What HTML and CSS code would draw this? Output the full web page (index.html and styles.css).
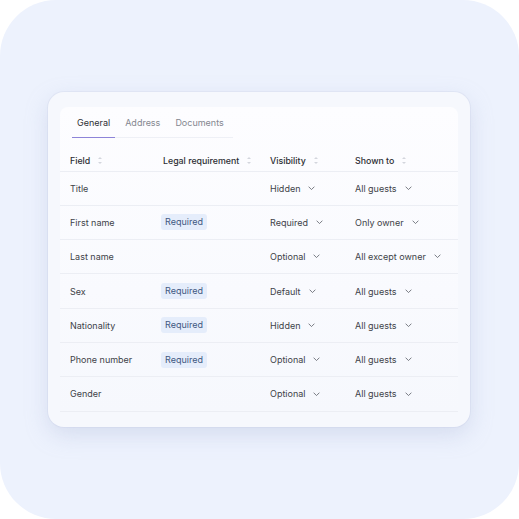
FILE: index.html
```html
<!DOCTYPE html>
<html lang="en">
<head>
    <meta charset="UTF-8">
    <meta name="viewport" content="width=device-width, initial-scale=1.0">
    <title>Guest fields</title>
    <link rel="stylesheet" href="styles.css">
</head>
<body>
    <div class="backdrop">
        <div class="card">
            <div class="panel">
                <div class="tabs">
                    <button class="tabs__tab is-selected">General</button>
                    <button class="tabs__tab">Address</button>
                    <button class="tabs__tab">Documents</button>
                </div>

                <div class="fields">
                    <div class="fields__row fields__row--head">
                        <span class="fields__th">Field <i class="sort"></i></span>
                        <span class="fields__th">Legal requirement <i class="sort"></i></span>
                        <span class="fields__th">Visibility <i class="sort"></i></span>
                        <span class="fields__th">Shown to <i class="sort"></i></span>
                    </div>

                    <div class="fields__row">
                        <span>Title</span>
                        <span></span>
                        <span class="select">Hidden <svg viewBox="0 0 8 5"><path d="M1 1l3 3 3-3"/></svg></span>
                        <span class="select">All guests <svg viewBox="0 0 8 5"><path d="M1 1l3 3 3-3"/></svg></span>
                    </div>
                    <div class="fields__row">
                        <span>First name</span>
                        <span><em class="badge">Required</em></span>
                        <span class="select">Required <svg viewBox="0 0 8 5"><path d="M1 1l3 3 3-3"/></svg></span>
                        <span class="select">Only owner <svg viewBox="0 0 8 5"><path d="M1 1l3 3 3-3"/></svg></span>
                    </div>
                    <div class="fields__row">
                        <span>Last name</span>
                        <span></span>
                        <span class="select">Optional <svg viewBox="0 0 8 5"><path d="M1 1l3 3 3-3"/></svg></span>
                        <span class="select">All except owner <svg viewBox="0 0 8 5"><path d="M1 1l3 3 3-3"/></svg></span>
                    </div>
                    <div class="fields__row">
                        <span>Sex</span>
                        <span><em class="badge">Required</em></span>
                        <span class="select">Default <svg viewBox="0 0 8 5"><path d="M1 1l3 3 3-3"/></svg></span>
                        <span class="select">All guests <svg viewBox="0 0 8 5"><path d="M1 1l3 3 3-3"/></svg></span>
                    </div>
                    <div class="fields__row">
                        <span>Nationality</span>
                        <span><em class="badge">Required</em></span>
                        <span class="select">Hidden <svg viewBox="0 0 8 5"><path d="M1 1l3 3 3-3"/></svg></span>
                        <span class="select">All guests <svg viewBox="0 0 8 5"><path d="M1 1l3 3 3-3"/></svg></span>
                    </div>
                    <div class="fields__row">
                        <span>Phone number</span>
                        <span><em class="badge">Required</em></span>
                        <span class="select">Optional <svg viewBox="0 0 8 5"><path d="M1 1l3 3 3-3"/></svg></span>
                        <span class="select">All guests <svg viewBox="0 0 8 5"><path d="M1 1l3 3 3-3"/></svg></span>
                    </div>
                    <div class="fields__row">
                        <span>Gender</span>
                        <span></span>
                        <span class="select">Optional <svg viewBox="0 0 8 5"><path d="M1 1l3 3 3-3"/></svg></span>
                        <span class="select">All guests <svg viewBox="0 0 8 5"><path d="M1 1l3 3 3-3"/></svg></span>
                    </div>
                </div>
            </div>
        </div>
    </div>
</body>
</html>
```

FILE: styles.css
```css
html, body { margin: 0; height: 100%; background: #fff; }
body { font-family: Inter, "Noto Sans", sans-serif; font-size: 9px; color: #404248; }

.backdrop { width: 519px; height: 519px; border-radius: 56px; background: #edf2fd; padding: 92px 49px 0 48px; box-sizing: border-box; }

.card { height: 335px; border-radius: 16px; background: #f6f8fd; box-shadow: 0 8px 22px rgba(170, 180, 215, .35), 0 0 0 1px rgba(225, 230, 245, .8); padding: 15px 12px 0; box-sizing: border-box; }
.panel { border-radius: 8px 8px 0 0; background: linear-gradient(#fdfdff 0, #f9fafe 60%, #f6f8fd 100%); }

/* tabs */
.tabs { display: flex; gap: 5px; width: fit-content; margin-left: 12px; padding: 10px 4px 0 0; border-bottom: 1.5px solid #eef0f6; }
.tabs__tab { font: inherit; line-height: 12px; color: #84878f; background: none; border: 0; padding: 0 5px 8px; margin-bottom: -1.5px; border-bottom: 1.5px solid transparent; }
.tabs__tab.is-selected { color: #2d2f35; border-bottom-color: #8d84d8; }

/* table */
.fields__row { display: grid; grid-template-columns: 93px 107px 85px 1fr; align-items: center; height: 34.3px; padding-left: 10px; border-bottom: 1px solid #eceef4; box-sizing: border-box; }
.fields__row--head { height: 34px; align-items: end; padding-bottom: 3px; }
.fields__th { font-size: 8.8px; font-weight: 500; color: #2c2e33; display: flex; align-items: center; gap: 8px; line-height: 14px; }

.sort { display: inline-block; width: 4px; height: 7px; position: relative; }
.sort::before, .sort::after { content: ""; position: absolute; left: 0; border-left: 2px solid transparent; border-right: 2px solid transparent; }
.sort::before { top: 0; border-bottom: 2.5px solid #d3d6dd; }
.sort::after { bottom: 0; border-top: 2.5px solid #d3d6dd; }

.select { display: flex; align-items: center; gap: 8px; }
.select svg { width: 7px; height: 4.5px; fill: none; stroke: #676a72; stroke-width: 1; stroke-linecap: round; stroke-linejoin: round; }

.badge { font-style: normal; display: inline-block; background: #e5edfb; color: #3e5781; padding: 3px 4px; border-radius: 3px; margin-left: -2px; line-height: 10px; }
```
